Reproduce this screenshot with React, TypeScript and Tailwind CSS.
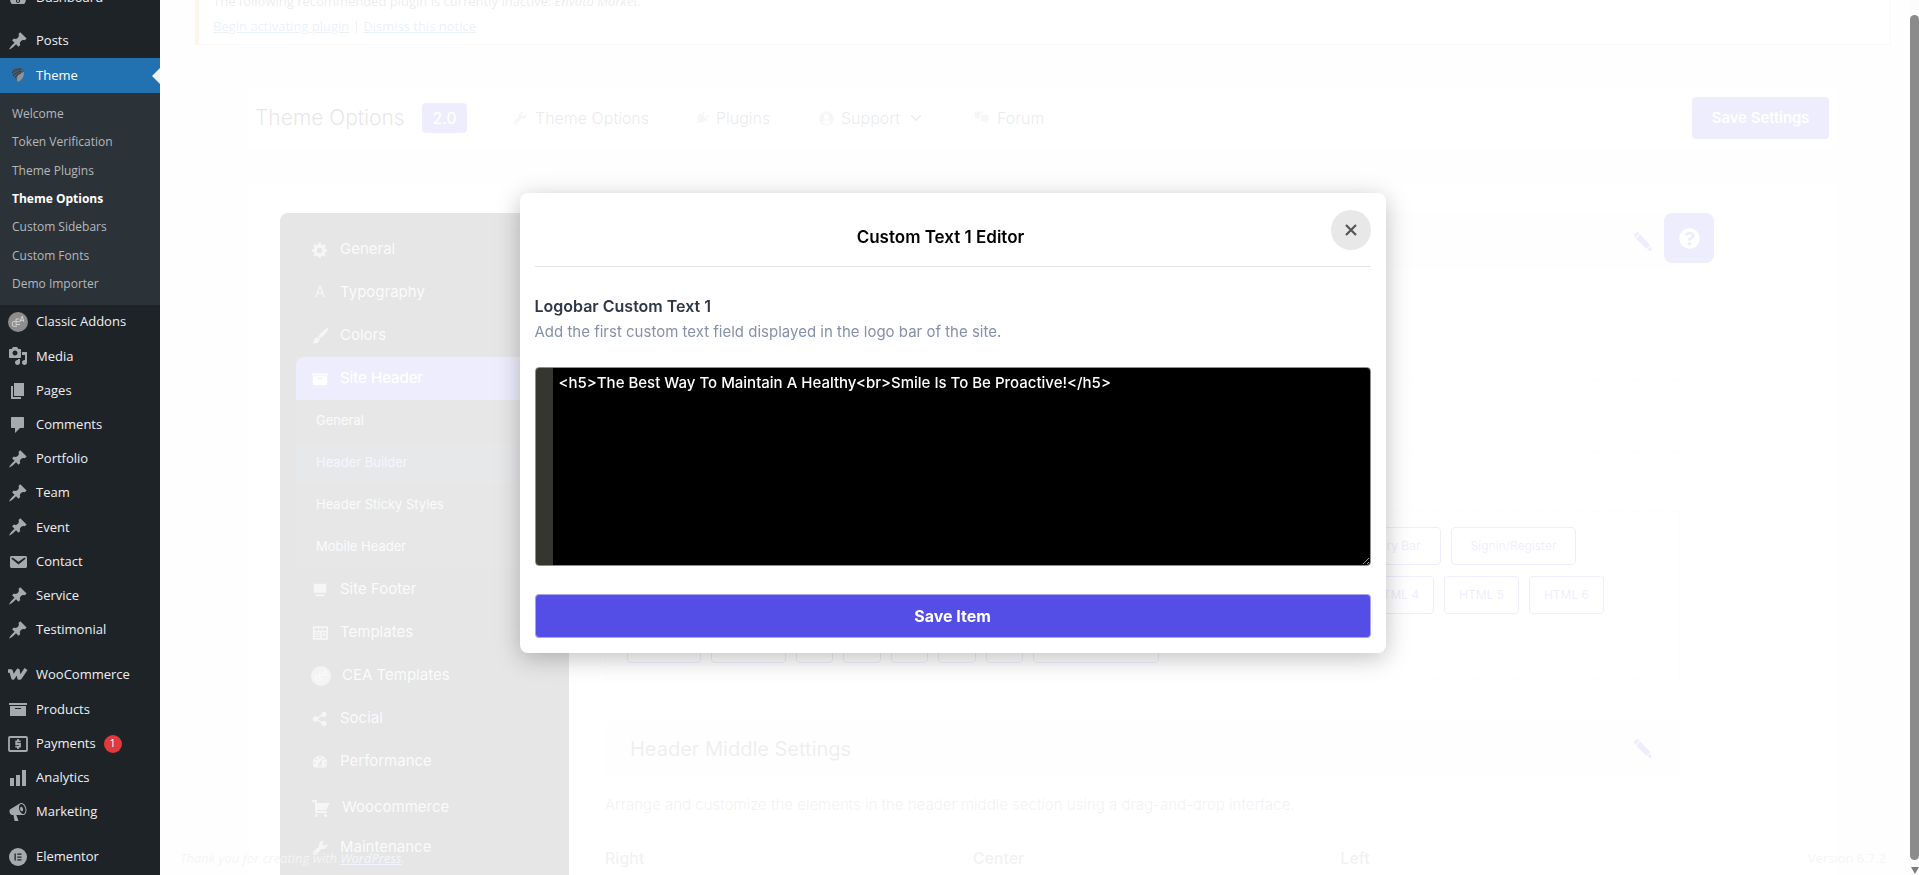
import { ReactNode, useState } from "react";
import { FaPlug, FaQuestionCircle, FaUserCircle } from "react-icons/fa";
import { ChevronDown } from "lucide-react";

const paths = {
  dashboard:
    "M3.76 16h12.48c1.1-1.37 1.76-3.11 1.76-5 0-4.42-3.58-8-8-8s-8 3.58-8 8c0 1.89.66 3.63 1.76 5zM10 4c.55 0 1 .45 1 1s-.45 1-1 1-1-.45-1-1 .45-1 1-1zM6 6c.55 0 1 .45 1 1s-.45 1-1 1-1-.45-1-1 .45-1 1-1zm8 0c.55 0 1 .45 1 1s-.45 1-1 1-1-.45-1-1 .45-1 1-1zm-5.37 5.55L12 7v6c0 1.1-.9 2-2 2s-2-.9-2-2c0-.57.24-1.08.63-1.45zM4 10c.55 0 1 .45 1 1s-.45 1-1 1-1-.45-1-1 .45-1 1-1zm12 0c.55 0 1 .45 1 1s-.45 1-1 1-1-.45-1-1 .45-1 1-1zm-5 3c0-.55-.45-1-1-1s-1 .45-1 1 .45 1 1 1 1-.45 1-1z",
  pin: "M10.44 3.02l1.82-1.82 6.36 6.35-1.83 1.82c-1.05-.68-2.48-.57-3.41.36l-.75.75c-.92.93-1.04 2.35-.35 3.41l-1.83 1.82-2.41-2.41-2.8 2.79c-.42.42-3.38 2.71-3.8 2.29s1.86-3.39 2.28-3.81l2.79-2.79L4.1 9.36l1.83-1.82c1.05.69 2.48.57 3.4-.36l.75-.75c.93-.92 1.05-2.35.36-3.41z",
  media:
    "M13 11V4c0-.55-.45-1-1-1h-1.67L9 1H5L3.67 3H2c-.55 0-1 .45-1 1v7c0 .55.45 1 1 1h10c.55 0 1-.45 1-1zM7 4.5c1.38 0 2.5 1.12 2.5 2.5S8.38 9.5 7 9.5 4.5 8.38 4.5 7 5.62 4.5 7 4.5zM14 6h5v10.5c0 1.38-1.12 2.5-2.5 2.5S14 17.88 14 16.5s1.12-2.5 2.5-2.5c.17 0 .34.02.5.05V9h-3V6zm-4 8.05V13h2v3.5c0 1.38-1.12 2.5-2.5 2.5S7 17.88 7 16.5 8.12 14 9.5 14c.17 0 .34.02.5.05z",
  page: "M6 15V2h10v13H6zm-1 1h8v2H3V5h2v11z",
  comment: "M4 2h11c.6 0 1 .4 1 1v9c0 .6-.4 1-1 1h-3l-5 5v-5H4c-.6 0-1-.4-1-1V3c0-.6.4-1 1-1z",
  email:
    "M3.87 4h13.25C18.37 4 19 4.59 19 5.79v8.42c0 1.19-.63 1.79-1.88 1.79H3.87c-1.25 0-1.88-.6-1.88-1.79V5.79c0-1.2.63-1.79 1.88-1.79zm6.62 8.6l6.74-5.53c.24-.2.43-.66.13-1.07-.29-.41-.82-.42-1.17-.17l-5.7 3.86L4.8 5.83c-.35-.25-.88-.24-1.17.17-.3.41-.11.87.13 1.07z",
  archive: "M19 4v2H1V4h18zM2 7h16v10H2V7zm11 3V9H7v1h6z",
  chart: "M18 18V2h-4v16h4zm-6 0V7H8v11h4zm-6 0v-8H2v8h4z",
  megaphone:
    "M18.15 5.94c.46 1.62.38 3.22-.02 4.48-.42 1.28-1.26 2.18-2.3 2.48-.16.06-.26.06-.4.06-.06.02-.12.02-.18.02-.06.02-.14.02-.22.02h-6.8l2.22 5.5c.02.14-.06.26-.14.34-.08.1-.24.16-.34.16H6.95c-.1 0-.26-.06-.34-.16-.08-.08-.16-.2-.14-.34l-1-5.5H4.25l-.02-.02c-.5.06-1.08-.18-1.54-.62s-.88-1.08-1.06-1.88c-.24-.8-.2-1.56-.02-2.2.18-.62.58-1.08 1.06-1.3l.02-.02 9-5.4c.1-.06.18-.1.24-.16.06-.04.14-.08.24-.12.16-.08.28-.12.5-.18 1.04-.3 2.24.1 3.22.98s1.84 2.24 2.26 3.86zm-2.58 5.98h-.02c.4-.1.74-.34 1.04-.7.58-.7.86-1.76.86-3.04 0-.64-.1-1.3-.28-1.98-.34-1.36-1.02-2.5-1.78-3.24s-1.68-1.1-2.46-.88c-.82.22-1.4.96-1.7 2-.32 1.04-.28 2.36.06 3.72.38 1.36 1 2.5 1.8 3.24.78.74 1.62 1.1 2.48.88zm-2.54-7.08c.22-.04.42-.02.62.04.38.16.76.48 1.02 1s.42 1.2.42 1.78c0 .3-.04.56-.12.8-.18.48-.44.84-.86.94-.34.1-.8-.06-1.14-.4s-.64-.86-.78-1.5c-.18-.62-.12-1.24.02-1.72s.48-.84.82-.94z",
  gear: "M18 12h-2.18c-.17.7-.44 1.35-.81 1.93l1.54 1.54-2.1 2.1-1.54-1.54c-.58.36-1.23.63-1.91.79V19H8v-2.18c-.68-.16-1.33-.43-1.91-.79l-1.54 1.54-2.12-2.12 1.54-1.54c-.36-.58-.63-1.23-.79-1.91H1V9.03h2.17c.16-.7.44-1.35.8-1.94L2.43 5.55l2.1-2.1 1.54 1.54c.58-.37 1.24-.64 1.93-.81V2h3v2.18c.68.16 1.33.43 1.91.79l1.54-1.54 2.12 2.12-1.54 1.54c.36.59.64 1.24.8 1.94H18V12zm-8.5 1.5c1.66 0 3-1.34 3-3s-1.34-3-3-3-3 1.34-3 3 1.34 3 3 3z",
  wrench:
    "M16.68 9.77c-1.34 1.34-3.3 1.67-4.95.99l-5.41 6.52c-.99.99-2.59.99-3.58 0s-.99-2.59 0-3.57l6.52-5.42c-.68-1.65-.35-3.61.99-4.95 1.28-1.28 3.12-1.62 4.72-1.06l-2.89 2.89 2.82 2.82 2.86-2.87c.53 1.58.18 3.39-1.08 4.65zM3.81 16.21c.4.39 1.04.39 1.43 0 .4-.4.4-1.04 0-1.43-.39-.4-1.03-.4-1.43 0-.39.39-.39 1.03 0 1.43z",
  share:
    "M14.5 12c1.66 0 3 1.34 3 3s-1.34 3-3 3-3-1.34-3-3c0-.24.03-.46.09-.69l-4.38-2.3c-.55.61-1.33.99-2.21.99-1.66 0-3-1.34-3-3s1.34-3 3-3c.88 0 1.66.39 2.21.99l4.38-2.3c-.06-.23-.09-.45-.09-.69 0-1.66 1.34-3 3-3s3 1.34 3 3-1.34 3-3 3c-.88 0-1.66-.39-2.21-.99l-4.38 2.3c.06.23.09.45.09.69s-.03.46-.09.69l4.38 2.3c.55-.61 1.33-.99 2.21-.99z",
  cart: "M6 13h9c.55 0 1 .45 1 1s-.45 1-1 1H5c-.55 0-1-.45-1-1V4H2c-.55 0-1-.45-1-1s.45-1 1-1h3c.55 0 1 .45 1 1v2h13l-4 7H6v1zm-.5 3c.83 0 1.5.67 1.5 1.5S6.33 19 5.5 19 4 18.33 4 17.5 4.67 16 5.5 16zm9 0c.83 0 1.5.67 1.5 1.5s-.67 1.5-1.5 1.5-1.5-.67-1.5-1.5.67-1.5 1.5-1.5z",
  brush:
    "M18.700 1.200c.6.500.4 1.300 0 2-2 3.300-4.600 6.300-7.400 8.600-.8.600-1.700.6-2.300 0-.7-.6-.7-1.500-.1-2.300C11.300 6.600 14.200 3.700 17 1.400c.6-.4 1.200-.6 1.700-.2zM7.600 11.500c1.300.2 2.100 1.100 2.100 2.300-.2 3.100-3.700 4.900-8.700 4 1.800-.6 2-1.700 2.400-3.200.5-2 2.200-3.400 4.200-3.100z",
  chat: "M2 2h7.500c.6 0 1 .4 1 1v1.500H9c-.8 0-1.500.7-1.500 1.500v4L5 12.500V10H2c-.6 0-1-.4-1-1V3c0-.6.4-1 1-1zm8 4h7.500c.6 0 1 .4 1 1v6c0 .6-.4 1-1 1H16v3.500L12.500 14H10c-.6 0-1-.4-1-1V7c0-.6.4-1 1-1z",
  footer: "M3 3h14v10H3V3zm2 12h10v2H5v-2z",
  templates:
    "M2 2.5h17v15H2v-15zm2 2v3h4v-3H4zm5 0v3h3v-3H9zm4 0v3h4v-3h-4zM4 9.500v1h6v-1H4zm0 2.500v1h6v-1H4zm0 2.500v1h6v-1H4zm8-5v6h5v-6h-5zm1 1h3v3h-3v-3z",
  pencil:
    "M1.200 4.200A3 3 0 0 1 6.400 1.500L2.300 6a3 3 0 0 1-1.100-1.800zM7.200 2.300l9.300 9.900c.5.600.5 1.200 0 1.700l-2.200 2.300c-.5.500-1.100.5-1.700 0L3.200 6.700zM17.600 14.200l1.200 5-4.600-1.300z",
};

type IconName = keyof typeof paths;

function Icon({ name, className = "size-5" }: { name: IconName; className?: string }) {
  return (
    <svg viewBox="0 0 20 20" fill="currentColor" fillRule="evenodd" className={`${className} shrink-0`}>
      <path d={paths[name]} />
    </svg>
  );
}

function CeaIcon({ className }: { className: string }) {
  return (
    <svg viewBox="0 0 20 20" className={`${className} size-5 shrink-0`}>
      <circle cx="10" cy="10" r="10" fill="currentColor" />
      <g fill="none" stroke="#fff" strokeOpacity=".75" strokeWidth=".8">
        <path d="M7.500 9.500H5.500a1 1 0 0 0-1 1v2.700a1 1 0 0 0 1 1h3.500" />
        <path d="M11.500 7H8v5.500h4M8 9.700h3.300M11.500 10.500l2.800-6.300 1.500 5.600M12.200 8.300h3" />
      </g>
    </svg>
  );
}

function ThemeIcon() {
  return (
    <svg viewBox="0 0 20 20" className="size-5 shrink-0">
      <path d="M4 5c1-3 5-4 8-3 3 0 4 3 4 6 0 4-3 7-6 8-1-1-2-2-2-4-2-1-4-4-4-7z" fill="#4b5a68" />
      <path d="M9 12c0-3 3-5 7-6 0 5-1 7-6 10-1-1-1-2-1-4z" fill="#8a949c" />
      <path d="M4 7c3-3 6-4 9-4M5 10c2-3 5-4 8-5M7 12c1-2 3-4 6-5" stroke="#2f3d49" fill="none" />
    </svg>
  );
}

function WooIcon() {
  return (
    <svg viewBox="0 0 20 20" className="size-5 shrink-0" fill="none" stroke="currentColor" strokeWidth="3.6">
      <path d="M0 6h3l2 7 5-7.500 1 7.500h1l6-9" strokeLinejoin="round" />
    </svg>
  );
}

function PaymentsIcon() {
  return (
    <svg viewBox="0 0 20 20" className="size-5 shrink-0" fill="none" stroke="currentColor" strokeWidth="1.8">
      <rect x="1" y="3" width="18" height="14" rx="1" />
      <path d="M12.700 7.300H8.200v2.700h3.800v2.700H7.300M10 5v2M10 13v2" />
    </svg>
  );
}

function ElementorIcon() {
  return (
    <svg viewBox="0 0 20 20" className="size-5 shrink-0">
      <circle cx="10" cy="10" r="9" fill="currentColor" />
      <path d="M6.500 6.500h1.300v7H6.500zM9.300 6.500h4.200v1.300H9.300zM9.300 9.400h4.200v1.300H9.300zM9.300 12.200h4.200v1.300H9.300z" fill="#1d2327" />
    </svg>
  );
}

interface MenuItem {
  label: string;
  icon: ReactNode;
  badge?: number;
}

const pin = <Icon name="pin" />;

const contentMenu: MenuItem[] = [
  { label: "Classic Addons", icon: <CeaIcon className="text-[#8d8d8d]" /> },
  { label: "Media", icon: <Icon name="media" /> },
  { label: "Pages", icon: <Icon name="page" /> },
  { label: "Comments", icon: <Icon name="comment" /> },
  { label: "Portfolio", icon: pin },
  { label: "Team", icon: pin },
  { label: "Event", icon: pin },
  { label: "Contact", icon: <Icon name="email" /> },
  { label: "Service", icon: pin },
  { label: "Testimonial", icon: pin },
];

const shopMenu: MenuItem[] = [
  { label: "WooCommerce", icon: <WooIcon /> },
  { label: "Products", icon: <Icon name="archive" /> },
  { label: "Payments", icon: <PaymentsIcon />, badge: 1 },
  { label: "Analytics", icon: <Icon name="chart" /> },
  { label: "Marketing", icon: <Icon name="megaphone" /> },
];

const themeSubmenu = [
  "Welcome",
  "Token Verification",
  "Theme Plugins",
  "Theme Options",
  "Custom Sidebars",
  "Custom Fonts",
  "Demo Importer",
];

function MenuLink({ label, icon, badge }: MenuItem) {
  return (
    <li className="flex min-h-[34px] flex-1 items-center">
      <a href="#" className="flex items-center gap-2 pl-2 text-[13px] text-[#f0f0f1]">
        <span className="text-[#a7aaad]">{icon}</span>
        <span>{label}</span>
        {badge && (
          <span className="flex size-[18px] items-center justify-center rounded-full bg-[#e03a3c] text-[11px] text-white">
            {badge}
          </span>
        )}
      </a>
    </li>
  );
}

function AdminMenu() {
  return (
    <nav className="relative z-20 -mt-[19px] w-40 shrink-0 bg-[#1d2327] font-['Open_Sans','Noto_Sans',sans-serif]">
      <ul className="mb-[9px]">
        <MenuLink label="Dashboard" icon={<Icon name="dashboard" />} />
      </ul>
      <ul>
        <MenuLink label="Posts" icon={pin} />
        <li>
          <a
            href="#"
            className="relative flex h-[35px] items-center gap-2 bg-[#2271b1] pl-2 text-[13px] text-white"
          >
            <ThemeIcon />
            Theme
            <span className="absolute right-0 border-y-8 border-r-8 border-y-transparent border-r-[#f0f0f1]" />
          </a>
          <ul className="flex h-[212px] flex-col bg-[#2c3338] py-[7px]">
            {themeSubmenu.map((label) => (
              <li key={label} className="flex flex-1 items-center pl-3">
                <a
                  href="#"
                  className={
                    label === "Theme Options"
                      ? "text-xs font-bold text-white"
                      : "text-xs text-[#b5b8bb]"
                  }
                >
                  {label}
                </a>
              </li>
            ))}
          </ul>
        </li>
      </ul>
      <ul className="mb-[11px] flex h-[342px] flex-col">
        {contentMenu.map((item) => (
          <MenuLink key={item.label} {...item} />
        ))}
      </ul>
      <ul className="mb-[11px] flex h-[171px] flex-col">
        {shopMenu.map((item) => (
          <MenuLink key={item.label} {...item} />
        ))}
      </ul>
      <ul>
        <MenuLink label="Elementor" icon={<ElementorIcon />} />
      </ul>
    </nav>
  );
}

function TopBar() {
  return (
    <header className="mt-[43px] flex h-[60px] items-center rounded bg-white pr-2 pl-1.5 text-black">
      <h1 className="w-[167px] text-[21px] font-light whitespace-nowrap">Theme Options</h1>
      <span className="flex h-[30px] w-[45px] items-center justify-center rounded bg-[#544ee5] text-white">
        2.0
      </span>
      <nav className="ml-[30px] flex items-center text-base font-light text-[#1f2937]">
        <a href="#" className="flex h-9 w-[183px] items-center gap-[7px] rounded bg-[#f9f9fb] pl-[15px]">
          <Icon name="wrench" className="size-4 text-[#9ca3af]" />
          Theme Options
        </a>
        <a href="#" className="flex w-[124px] items-center gap-[7px] pl-[15px]">
          <FaPlug className="size-3.5 rotate-45 text-[#9ca3af]" />
          Plugins
        </a>
        <a href="#" className="flex w-[155px] items-center gap-[7px] pl-[15px]">
          <FaUserCircle className="size-[15px] text-[#9ca3af]" />
          Support
          <ChevronDown className="size-[18px]" strokeWidth={1.5} />
        </a>
        <a href="#" className="flex items-center gap-[7px] pl-[15px]">
          <Icon name="chat" className="size-4 text-[#9ca3af]" />
          Forum
        </a>
      </nav>
      <button className="ml-auto h-[42px] w-[137px] rounded bg-[#544ee5] text-[15px] font-medium text-white">
        Save Settings
      </button>
    </header>
  );
}

const headerTabs = ["General", "Header Builder", "Header Sticky Styles", "Mobile Header"];

function OptionRow({ icon, label, className = "" }: { icon: ReactNode; label: string; className?: string }) {
  return (
    <a
      href="#"
      className={`flex h-[43px] items-center gap-[11px] pl-[15px] text-[15px] text-[#cfd3d8] ${className}`}
    >
      <span className="text-[#9ca0a6]">{icon}</span>
      {label}
    </a>
  );
}

function OptionsNav() {
  const size = "size-[18px]";
  return (
    <aside className="w-[289px] shrink-0 rounded-tl-lg bg-black py-[15px] pl-4">
      <OptionRow icon={<Icon name="gear" className={size} />} label="General" />
      <OptionRow
        icon={<span className="block w-[18px] text-center">A</span>}
        label="Typography"
      />
      <OptionRow icon={<Icon name="brush" className={size} />} label="Colors" />
      <a
        href="#"
        className="flex h-[43px] items-center gap-[11px] rounded-tl-lg bg-[#544ee5] pl-[15px] text-[15px] text-white"
      >
        <Icon name="archive" className={size} />
        Site Header
      </a>
      <div className="bg-[#0c1219]">
        {headerTabs.map((tab) => (
          <a
            key={tab}
            href="#"
            className={
              tab === "Header Builder"
                ? "flex h-[42px] items-center bg-[#12152a] pl-5 text-[13px] text-[#a8a5f0]"
                : "flex h-[42px] items-center pl-5 text-[13px] text-[#cfd3d8]"
            }
          >
            {tab}
          </a>
        ))}
      </div>
      <OptionRow icon={<Icon name="footer" className={size} />} label="Site Footer" />
      <OptionRow icon={<Icon name="templates" className={size} />} label="Templates" />
      <OptionRow icon={<CeaIcon className="text-[#8d8d8d]" />} label="CEA Templates" />
      <OptionRow icon={<Icon name="share" className={size} />} label="Social" />
      <OptionRow icon={<Icon name="dashboard" className={size} />} label="Performance" />
      <OptionRow icon={<Icon name="cart" />} label="Woocommerce" className="pt-[6px]" />
      <OptionRow icon={<Icon name="wrench" className={size} />} label="Maintenance" />
    </aside>
  );
}

function Chip({ label, className }: { label?: string; className: string }) {
  return (
    <span
      className={`flex h-[38px] items-center justify-center rounded border border-[#544ee5] text-xs text-[#544ee5] ${className}`}
    >
      {label}
    </span>
  );
}

function SectionBar({ title }: { title?: string }) {
  return (
    <div className="flex h-[57px] items-center justify-between rounded-lg bg-[#f4f4f5] pr-[27px] pl-[25px] text-[#4b5563]">
      <h2 className="text-xl">{title}</h2>
      <Icon name="pencil" className="size-5 text-[#544ee5]" />
    </div>
  );
}

function HeaderBuilder() {
  return (
    <section className="relative mr-[157px] ml-9 flex-1">
      <SectionBar />
      <button
        aria-label="Help"
        className="absolute top-0 -right-[34px] flex size-[50px] items-center justify-center rounded-lg bg-[#544ee5] text-white"
      >
        <FaQuestionCircle className="size-[21px]" />
      </button>
      <div className="mt-[109px] mb-[59px] h-[73px] border-y border-dashed border-[#d8dbe0]" />
      <div className="flex flex-col gap-[11px] border border-dashed border-[#d8dbe0] px-[21px] py-[15px]">
        <div className="flex gap-2.5 pl-[689px]">
          <Chip label="Secondary Bar" className="w-[125px]" />
          <Chip label="Signin/Register" className="w-[125px]" />
        </div>
        <div className="flex gap-2.5 pl-[732px]">
          <Chip label="HTML 4" className="w-[75px]" />
          <Chip label="HTML 5" className="w-[75px]" />
          <Chip label="HTML 6" className="w-[75px]" />
        </div>
        <div className="flex gap-2.5">
          <Chip className="w-[74px]" />
          <Chip className="w-[75px]" />
          <Chip className="w-[37px]" />
          <Chip className="w-[38px]" />
          <Chip className="w-[37px]" />
          <Chip className="w-[38px]" />
          <Chip className="w-[37px]" />
          <Chip className="w-[126px]" />
        </div>
      </div>
      <div className="mt-[41px]">
        <SectionBar title="Header Middle Settings" />
      </div>
      <p className="mt-[18px] text-[15px] leading-5 font-light text-[#6b7280]">
        Arrange and customize the elements in the header middle section using a
        drag-and-drop interface.
      </p>
      <div className="mt-[33px] grid grid-cols-3 gap-7 text-base leading-5 font-medium text-[#6b7280]">
        <h3>Right</h3>
        <h3>Center</h3>
        <h3>Left</h3>
      </div>
    </section>
  );
}

function EditorDialog() {
  const [text, setText] = useState(
    "<h5>The Best Way To Maintain A Healthy<br>Smile Is To Be Proactive!</h5>"
  );

  return (
    <div className="fixed inset-0 z-10 flex items-center justify-center bg-white/90 pr-3.5 pb-[30px]">
      <div
        role="dialog"
        aria-labelledby="editor-title"
        className="w-[866px] rounded-lg bg-white px-[15px] pt-[17px] pb-[15px] shadow-[0_5px_25px_rgba(0,0,0,0.25)]"
      >
        <div className="relative flex h-[57px] items-center justify-center border-b border-[#e5e5e5] pr-6">
          <h2 id="editor-title" className="text-[17px] font-semibold text-black">
            Custom Text 1 Editor
          </h2>
          <button
            aria-label="Close"
            className="absolute top-0 right-0 flex size-10 items-center justify-center rounded-full bg-[#e8e8e8] text-[#555]"
          >
            <svg viewBox="0 0 12 12" className="size-3" stroke="currentColor" strokeWidth="2.2">
              <path d="M1 1l10 10M11 1L1 11" />
            </svg>
          </button>
        </div>
        <label htmlFor="custom-text" className="mt-[27px] block text-base leading-6 font-semibold text-[#2d3748]">
          Logobar Custom Text 1
        </label>
        <p className="mt-1 text-[15px] leading-5 text-[#8590aa]">
          Add the first custom text field displayed in the logo bar of the site.
        </p>
        <textarea
          id="custom-text"
          value={text}
          onChange={(e) => setText(e.target.value)}
          className="mt-[25px] block h-[199px] w-full rounded border border-[#8c8f94] bg-[linear-gradient(to_right,#35362f_17px,#000_17px)] py-[3px] pr-2 pl-[23px] text-[15px] leading-6 font-medium text-white"
        />
        <button className="mt-7 block h-11 w-full rounded border border-[#a5a2f2] bg-[#554ee6] text-base font-bold text-white">
          Save Item
        </button>
      </div>
    </div>
  );
}

export default function App() {
  return (
    <div className="flex h-screen overflow-hidden bg-[#f0f0f1] font-['Inter','Open_Sans',sans-serif]">
      <AdminMenu />
      <main className="relative mr-[9px] flex-1">
        <div className="-mt-2.5 mr-[19px] ml-[35px] flex flex-col gap-[5px] border border-l-4 border-[#c3c4c7] border-l-[#dba617] bg-white pb-2 pl-3.5 font-['Open_Sans','Noto_Sans',sans-serif] text-[13px] leading-5 text-[#3c434a]">
          <p>
            The following recommended plugin is currently inactive: <em>Envato Market</em>.
          </p>
          <p>
            <a href="#" className="text-[#2271b1] underline">
              Begin activating plugin
            </a>{" "}
            |{" "}
            <a href="#" className="text-[#2271b1] underline">
              Dismiss this notice
            </a>
          </p>
        </div>
        <div className="mr-[73px] ml-[89px]">
          <TopBar />
          <div className="mt-[35px] flex bg-white pt-[30px] pl-[31px]">
            <OptionsNav />
            <HeaderBuilder />
          </div>
        </div>
        <footer className="absolute right-6 bottom-[7px] left-5 flex justify-between font-['Open_Sans','Noto_Sans',sans-serif] text-[13px] leading-5 text-[#8c8f94]">
          <em>
            Thank you for creating with{" "}
            <a href="#" className="text-[#72aee6] underline">
              WordPress
            </a>
            .
          </em>
          <span>Version 6.7.2</span>
        </footer>
      </main>
      <EditorDialog />
      <div className="fixed inset-y-0 right-0 z-20 flex w-[9px] flex-col items-center bg-[#fcfcfc] pt-[15px]">
        <div className="w-full flex-1 rounded-full bg-[#8b8b8b]" />
        <span className="my-[7px] mb-px border-x-4 border-t-[7px] border-x-transparent border-t-[#7d7d7d]" />
      </div>
    </div>
  );
}
